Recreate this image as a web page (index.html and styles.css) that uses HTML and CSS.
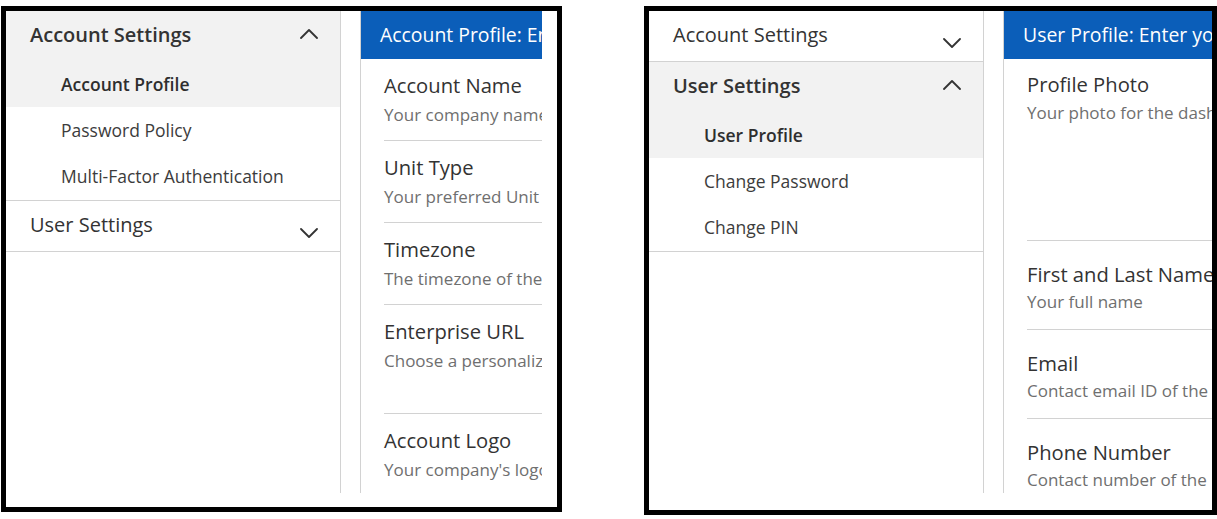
FILE: index.html
```html
<!DOCTYPE html>
<html lang="en">
<head>
<meta charset="utf-8">
<title>Settings</title>
<link rel="stylesheet" href="styles.css">
</head>
<body>
<div class="stage">
  <div class="frame frame-a">
    <div class="screen screen-a">
      <nav class="sidebar">
        <section class="group open">
          <div class="group-head">
            <span class="group-title">Account Settings</span>
            <svg class="chev chev-up" viewBox="0 0 18 10" width="18" height="10"><polyline points="1,9 9,1 17,9"/></svg>
          </div>
          <ul class="sub">
            <li class="sub-item selected">Account Profile</li>
            <li class="sub-item">Password Policy</li>
            <li class="sub-item">Multi-Factor Authentication</li>
          </ul>
        </section>
        <section class="group">
          <div class="group-head">
            <span class="group-title">User Settings</span>
            <svg class="chev chev-down" viewBox="0 0 18 10" width="18" height="10"><polyline points="1,1 9,9 17,1"/></svg>
          </div>
        </section>
      </nav>
      <main class="content">
        <div class="banner">Account Profile: Enter your account details</div>
        <div class="field">
          <div class="field-title">Account Name</div>
          <div class="field-desc">Your company name</div>
        </div>
        <div class="field">
          <div class="field-title">Unit Type</div>
          <div class="field-desc">Your preferred Unit Type</div>
        </div>
        <div class="field">
          <div class="field-title">Timezone</div>
          <div class="field-desc">The timezone of the account</div>
        </div>
        <div class="field">
          <div class="field-title">Enterprise URL</div>
          <div class="field-desc">Choose a personalized URL for your account</div>
          <div class="field-extra"></div>
        </div>
        <div class="field">
          <div class="field-title">Account Logo</div>
          <div class="field-desc">Your company's logo</div>
        </div>
      </main>
    </div>
  </div>

  <div class="frame frame-b">
    <div class="screen screen-b">
      <nav class="sidebar">
        <section class="group">
          <div class="group-head">
            <span class="group-title">Account Settings</span>
            <svg class="chev chev-down" viewBox="0 0 18 10" width="18" height="10"><polyline points="1,1 9,9 17,1"/></svg>
          </div>
        </section>
        <section class="group open">
          <div class="group-head">
            <span class="group-title">User Settings</span>
            <svg class="chev chev-up" viewBox="0 0 18 10" width="18" height="10"><polyline points="1,9 9,1 17,9"/></svg>
          </div>
          <ul class="sub">
            <li class="sub-item selected">User Profile</li>
            <li class="sub-item">Change Password</li>
            <li class="sub-item">Change PIN</li>
          </ul>
        </section>
      </nav>
      <main class="content">
        <div class="banner">User Profile: Enter your profile details</div>
        <div class="field field-photo">
          <div class="field-title">Profile Photo</div>
          <div class="field-desc">Your photo for the dashboard</div>
          <div class="photo-space"></div>
        </div>
        <div class="field field-tall">
          <div class="field-title">First and Last Name</div>
          <div class="field-desc">Your full name</div>
        </div>
        <div class="field field-tall">
          <div class="field-title">Email</div>
          <div class="field-desc">Contact email ID of the user</div>
        </div>
        <div class="field field-tall">
          <div class="field-title">Phone Number</div>
          <div class="field-desc">Contact number of the user</div>
        </div>
      </main>
    </div>
  </div>
</div>
</body>
</html>
```

FILE: styles.css
```css
* {
  box-sizing: border-box;
}

html, body {
  margin: 0;
  padding: 0;
  background: #ffffff;
}

body {
  font-family: "Open Sans", "Noto Sans", "Liberation Sans", sans-serif;
  color: #333333;
}

.stage {
  display: flex;
  align-items: flex-start;
  gap: 82px;
  padding: 6px 0 0 1px;
}

.frame {
  border: 5px solid #000000;
  background: #ffffff;
  overflow: hidden;
}

.frame-a {
  width: 561px;
  height: 506px;
}

.frame-b {
  width: 573px;
  height: 509px;
}

.screen {
  display: flex;
  height: 482px;
  overflow: hidden;
}

.screen-a {
  width: 536px;
}

.screen-b {
  width: 563px;
}

/* Sidebar */
.sidebar {
  flex: 0 0 335px;
  border-right: 1px solid #d2d2d2;
}

.group {
  border-bottom: 1px solid #d2d2d2;
}

.group-head {
  display: flex;
  align-items: flex-start;
  height: 50px;
  padding: 10px 22px 0 24px;
}

.group-title {
  font-size: 20px;
  line-height: 28px;
  color: #333333;
  white-space: nowrap;
}

.group.open .group-head {
  background: #f2f2f2;
}

.group.open .group-title {
  font-weight: 600;
}

.chev {
  margin-left: auto;
  fill: none;
  stroke: #333333;
  stroke-width: 1.8;
  stroke-linecap: round;
  stroke-linejoin: round;
}

.chev-up {
  margin-top: 8px;
}

.chev-down {
  margin-top: 17px;
}

.sub {
  list-style: none;
  margin: 0;
  padding: 0 0 1px 0;
}

.sub-item {
  height: 46px;
  line-height: 46px;
  padding-left: 55px;
  font-size: 17.5px;
  color: #3c3c3c;
  white-space: nowrap;
}

.sub-item.selected {
  background: #f2f2f2;
  font-weight: 600;
  color: #2e2e2e;
}

/* Content */
.content {
  flex: 1 1 auto;
  min-width: 0;
  margin-left: 19px;
  border-left: 1px solid #d2d2d2;
  overflow: hidden;
}

.banner {
  height: 48px;
  line-height: 48px;
  padding-left: 19px;
  background: #0b5eb9;
  color: #ffffff;
  font-size: 19.4px;
  white-space: nowrap;
}

.field {
  margin-left: 23px;
  padding: 12px 0 11px 0;
  border-bottom: 1px solid #d2d2d2;
  white-space: nowrap;
}

.field-title {
  font-size: 20.2px;
  line-height: 28px;
  color: #333333;
}

.field-desc {
  margin-top: 2px;
  font-size: 17px;
  line-height: 28px;
  color: #6f6f6f;
}

.field-extra {
  height: 27px;
}

.field-photo {
  padding-top: 11px;
  padding-bottom: 0;
}

.field-photo .field-desc {
  margin-top: 1px;
}

.photo-space {
  height: 113px;
}

.field-tall {
  padding: 19px 0 13px 0;
}

.field-tall .field-desc {
  margin-top: 0;
}
```
